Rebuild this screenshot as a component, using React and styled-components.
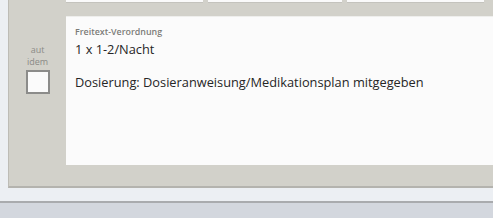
import styled, { createGlobalStyle } from "styled-components";

const GlobalStyle = createGlobalStyle`
  html, body {
    margin: 0;
    padding: 0;
    background: #eceff3;
    overflow: hidden;
  }
  body {
    font-family: "Open Sans", "Noto Sans", sans-serif;
  }
`;

const Page = styled.div`
  width: 493px;
  height: 218px;
  display: flex;
  flex-direction: column;
  background: #eceff3;
`;

const Panel = styled.div`
  margin-left: 8px;
  height: 188px;
  background: #d2d1ca;
  border-left: 1px solid #bdbcb6;
  border-bottom: 2px solid #b4b3ae;
  box-sizing: border-box;
  display: flex;
  flex-direction: column;
`;

const FieldRow = styled.div`
  display: flex;
  gap: 5px;
  padding-left: 57px;
  height: 3px;
`;

const Field = styled.div`
  width: ${(p) => p.w}px;
  background: #fafafa;
  border-bottom: 1px solid #c4c3bd;
`;

const Body = styled.div`
  display: flex;
  margin-top: 13px;
`;

const AutIdem = styled.div`
  width: 57px;
  display: flex;
  flex-direction: column;
  align-items: center;
  padding-top: 28px;
`;

const Label = styled.div`
  font-size: 9px;
  font-weight: 500;
  line-height: 12px;
  color: #8a8a86;
  text-align: center;
`;

const Check = styled.div`
  width: 20px;
  height: 20px;
  margin-top: 2px;
  background: #fbfbfb;
  border: 2px solid #8c8c8a;
`;

const TextArea = styled.div`
  flex: 1;
  height: 149px;
  background: #fbfbfb;
  border-top: 1px solid #eeeeec;
  padding: 9px 0 0 9px;
  box-sizing: border-box;
  color: #262626;
`;

const Caption = styled.div`
  font-size: 8.9px;
  font-weight: 600;
  color: #7b7b78;
  line-height: 12px;
  margin-bottom: 3px;
`;

const Line = styled.div`
  font-size: 12.8px;
  line-height: 17px;
  margin-top: ${(p) => p.gap || 0}px;
`;

const Strip = styled.div`
  height: 13px;
  border-bottom: 2px solid #a9abae;
`;

const Footer = styled.div`
  flex: 1;
  background: #d3d7de;
`;

export default function App() {
  return (
    <Page>
      <GlobalStyle />
      <Panel>
        <FieldRow>
          <Field w={137} />
          <Field w={134} />
          <Field w={137} />
        </FieldRow>
        <Body>
          <AutIdem>
            <Label>aut</Label>
            <Label>idem</Label>
            <Check />
          </AutIdem>
          <TextArea>
            <Caption>Freitext-Verordnung</Caption>
            <Line>1 x 1-2/Nacht</Line>
            <Line gap={16}>Dosierung: Dosieranweisung/Medikationsplan mitgegeben</Line>
          </TextArea>
        </Body>
      </Panel>
      <Strip />
      <Footer />
    </Page>
  );
}
